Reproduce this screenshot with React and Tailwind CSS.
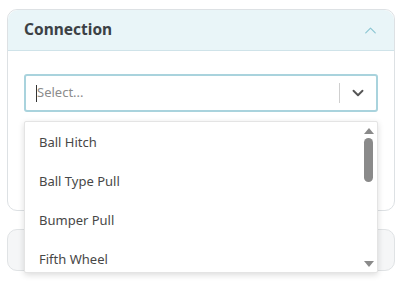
import { ChevronUp, ChevronDown } from "lucide-react";

const options = ["Ball Hitch", "Ball Type Pull", "Bumper Pull", "Fifth Wheel"];

const ConnectionSelect = () => {
  return (
    <div className="relative">
      {/* control */}
      <div className="flex items-center h-[38px] border-2 border-[#a9d3dd] rounded-[3px] bg-white">
        <div className="flex-1 flex items-center pl-[10px]">
          <span className="w-px h-[17px] bg-[#333]"></span>
          <span className="text-[13px] text-[#8c8c8c]">Select...</span>
        </div>
        <span className="w-px h-[20px] bg-[#cfcfcf]"></span>
        <div className="w-[36px] flex justify-center text-[#555]">
          <ChevronDown size={18} strokeWidth={2.5} />
        </div>
      </div>

      {/* menu */}
      <div className="absolute left-0 right-0 top-[47px] h-[152px] bg-white border border-[#e4e4e4] rounded-[2px] shadow-[0_2px_6px_rgba(0,0,0,0.14)] flex overflow-hidden z-10">
        <ul className="flex-1 pt-[1px]">
          {options.map((o) => (
            <li
              key={o}
              className="h-[39px] flex items-center pl-[14px] text-[13px] text-[#474747]"
            >
              {o}
            </li>
          ))}
        </ul>
        {/* scrollbar */}
        <div className="w-[15px] mr-[1px] flex flex-col items-center pt-[6px]">
          <span className="w-0 h-0 border-x-[5px] border-x-transparent border-b-[6px] border-b-[#8a8a8a]"></span>
          <span className="mt-[4px] w-[9px] h-[44px] rounded-full bg-[#8a8a8a]"></span>
          <span className="mt-auto mb-[5px] w-0 h-0 border-x-[5px] border-x-transparent border-t-[6px] border-t-[#8a8a8a]"></span>
        </div>
      </div>
    </div>
  );
};

export default function App() {
  return (
    <div
      className="w-[402px] h-[287px] bg-white px-[7px] pt-[9px]"
      style={{ fontFamily: '"Noto Sans", Arial, sans-serif' }}
    >
      {/* Connection card */}
      <div className="border border-[#dde1e4] rounded-[10px]">
        <div className="h-[41px] flex items-center justify-between pl-[16px] pr-[14px] bg-[#e9f5f8] border-b border-[#cfe3e9] rounded-t-[10px]">
          <span className="text-[15.5px] font-bold text-[#3c4145]">Connection</span>
          <ChevronUp size={19} strokeWidth={1.5} className="text-[#8cc6d3]" />
        </div>
        <div className="px-[16px] pt-[23px] pb-[98px]">
          <ConnectionSelect />
        </div>
      </div>

      {/* next card (collapsed) */}
      <div className="mt-[18px] h-[42px] border border-[#e0e3e5] rounded-[10px] bg-[#f5f6f7]"></div>
    </div>
  );
}
